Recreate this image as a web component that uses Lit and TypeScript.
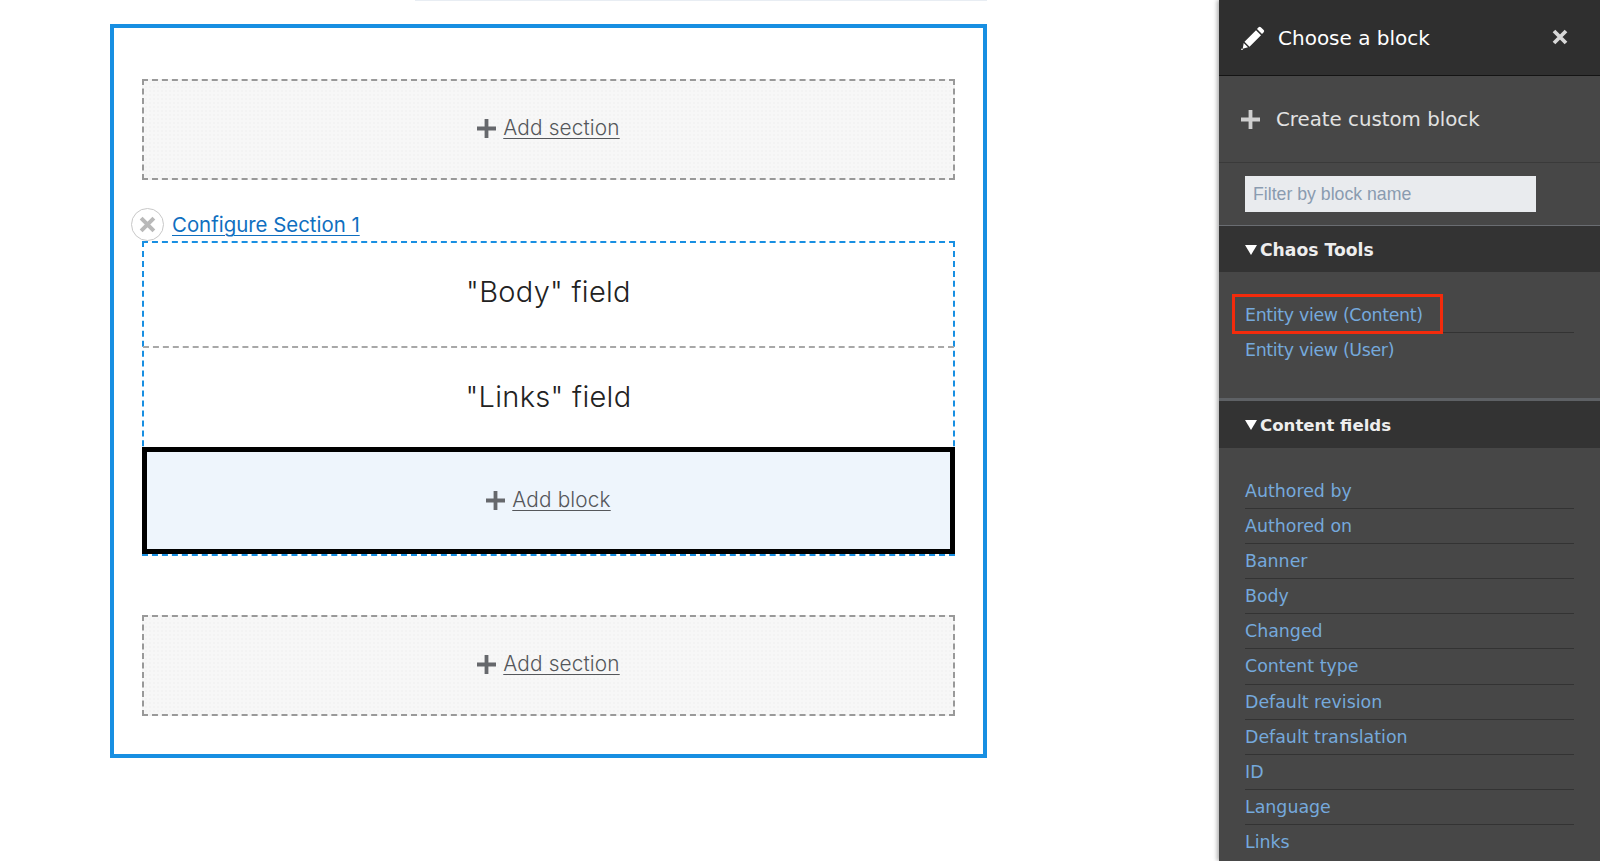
import { LitElement, html, css } from "lit";
import { customElement } from "lit/decorators.js";

const plus = (cls: string) => html`<svg class=${cls} viewBox="0 0 20 20"><path d="M8 0h4v8h8v4h-8v8H8v-8H0V8h8z" fill="currentColor"/></svg>`;
const cross = (cls: string) => html`<svg class=${cls} viewBox="0 0 16 16"><path d="M2 2l12 12M14 2L2 14" stroke="currentColor" stroke-width="3.8" fill="none"/></svg>`;
const tri = html`<svg class="tri" viewBox="0 0 12 10"><path d="M0 0h12L6 10z" fill="#fff"/></svg>`;
const pencil = html`<svg class="pencil" viewBox="0 0 24 24"><path d="M17.6 1.2a1.6 1.6 0 0 1 2.2 0l2.9 2.9a1.6 1.6 0 0 1 0 2.2L21 8 16 3zM15 4.2l5 5L8.5 20.7l-5-5zM2.7 17l4.3 4.3-5.3 1.4z" fill="#fff"/><circle cx="1" cy="23.3" r=".8" fill="#fff"/></svg>`;

const content = ["Authored by","Authored on","Banner","Body","Changed","Content type","Default revision","Default translation","ID","Language","Links"];

@customElement("app-root")
export class AppRoot extends LitElement {
  static styles = css`
    :host { display: block; height: 861px; overflow: hidden; background: #fff; }
    .page { display: flex; height: 861px; overflow: hidden; }
    .main { flex: 1; min-width: 0; padding: 24px 0 0 110px; font-family: "Inter", "Open Sans", sans-serif; font-weight: 300; position: relative; }
    .sliver { position: absolute; left: 415px; top: 0; width: 572px; height: 1px; background: #e8edf3; }
    .canvas { box-sizing: border-box; width: 877px; height: 734px; border: 4px solid #188fe2; padding: 51px 28px 0 28px; }
    .add-section { box-sizing: border-box; height: 101px; padding-bottom: 4px; border: 2px dashed #999; background: #f7f7f7 radial-gradient(#f3f3f3 1px, transparent 1px) 0 0 / 4px 4px; display: flex; align-items: center; justify-content: center; gap: 7px; color: #55575b; font-size: 20.8px; letter-spacing: .15px; }
    .add-section a, .add-block a { color: #55575b; text-decoration: underline; text-underline-offset: 3px; text-decoration-thickness: 1px; }
    .plus { width: 19px; height: 19px; color: #66686c; flex: none; margin-top: 2px; }
    .configure { height: 61px; display: flex; align-items: flex-end; padding-left: 30px; position: relative; box-sizing: border-box; padding-bottom: 4px; }
    .configure a { color: #0f6fc0; font-size: 20.4px; line-height: 24px; font-weight: 400; text-decoration: underline; text-underline-offset: 3px; text-decoration-thickness: 1px; }
    .close-round { position: absolute; left: -11px; top: 28px; box-sizing: border-box; width: 33px; height: 33px; border-radius: 50%; border: 1px solid #c8c8c8; background: #fff; display: flex; align-items: center; justify-content: center; color: #b9b9b9; }
    .close-round svg { width: 17px; height: 17px; }
    .section { box-sizing: border-box; height: 315px; border: 2px dashed #188fe2; position: relative; display: flex; flex-direction: column; }
    .field { display: flex; align-items: center; justify-content: center; color: #222; font-size: 29px; letter-spacing: .3px; box-sizing: border-box; }
    .body { height: 103px; padding-bottom: 7px; }
    .links { height: 101px; border-top: 2px dashed #a8a8a8; margin: 0 -1px; padding-bottom: 2px; }
    .add-block { position: absolute; left: -2px; right: -2px; top: 204px; height: 107px; padding-bottom: 2px; box-sizing: border-box; border: 5px solid #000; background: #eef5fc; display: flex; align-items: center; justify-content: center; gap: 7px; font-size: 20.8px; letter-spacing: .15px; color: #55575b; }
    .gap { height: 59px; }

    .side { width: 381px; flex: none; height: 861px; box-sizing: border-box; background: #474747; color: #fff; font-family: "DejaVu Sans", sans-serif; box-shadow: -2px 0 4px rgba(0,0,0,.3); overflow: hidden; }
    .head { height: 76px; box-sizing: border-box; background: #2f2f2f; border-bottom: 1px solid #141414; display: flex; align-items: center; padding: 0 32px 0 22px; font-size: 20px; }
    .pencil { width: 24px; height: 24px; margin-right: 13px; flex: none; }
    .head .title { flex: 1; }
    .x { width: 16px; height: 16px; color: #d8d8d8; flex: none; margin-bottom: 2px; }
    .create { height: 87px; box-sizing: border-box; display: flex; align-items: center; padding-left: 22px; gap: 16px; color: #e2e2e2; font-size: 19.8px; border-bottom: 1px solid #3a3a3a; }
    .create svg { width: 19px; height: 19px; color: #cfcfcf; }
    .filter { height: 62px; box-sizing: border-box; padding: 13px 0 0 26px; }
    .input { box-sizing: border-box; width: 291px; height: 36px; background: #e9ebee; display: flex; align-items: center; padding-left: 8px; color: #8a9bb0; font: 17.7px "Liberation Sans", sans-serif; }
    .group-head { height: 47px; padding-top: 1px; box-sizing: border-box; background: #333; border-top: 1px solid #6a6d72; display: flex; align-items: center; padding-left: 26px; gap: 3px; font-size: 17.2px; font-weight: 700; color: #eee; }
    .group-head.thick { border-top: 3px solid #5e6165; height: 50px; }
    .group-head.thick span { font-size: 16.6px; }
    .tri { width: 12px; height: 10px; flex: none; }
    .list { padding: 26px 26px 0 26px; }
    .list.first { height: 126px; box-sizing: border-box; }
    .item { height: 35.1px; box-sizing: border-box; border-bottom: 1px solid #333; color: #75a9dc; font-size: 17.4px; line-height: 34px; position: relative; }
    .item:last-child { border-bottom: 0; }
    .tight { letter-spacing: -.33px; }
    .mark { position: absolute; left: -13px; top: -4px; width: 211px; height: 40px; box-sizing: border-box; border: 3px solid #f32b0c; }
  `;

  render() {
    return html`<div class="page">
      <div class="main">
        <div class="sliver"></div>
        <div class="canvas">
          <div class="add-section">${plus("plus")}<a>Add section</a></div>
          <div class="configure">
            <span class="close-round">${cross("")}</span>
            <a>Configure Section 1</a>
          </div>
          <div class="section">
            <div class="field body">"Body" field</div>
            <div class="field links">"Links" field</div>
            <div class="add-block">${plus("plus")}<a>Add block</a></div>
          </div>
          <div class="gap"></div>
          <div class="add-section">${plus("plus")}<a>Add section</a></div>
        </div>
      </div>
      <aside class="side">
        <div class="head">${pencil}<span class="title">Choose a block</span>${cross("x")}</div>
        <div class="create">${plus("")}<span>Create custom block</span></div>
        <div class="filter"><div class="input">Filter by block name</div></div>
        <div class="group-head">${tri}<span>Chaos Tools</span></div>
        <div class="list first">
          <div class="item tight">Entity view (Content)<span class="mark"></span></div>
          <div class="item tight">Entity view (User)</div>
        </div>
        <div class="group-head thick">${tri}<span>Content fields</span></div>
        <div class="list">${content.map(c => html`<div class="item">${c}</div>`)}</div>
      </aside>
    </div>`;
  }
}
